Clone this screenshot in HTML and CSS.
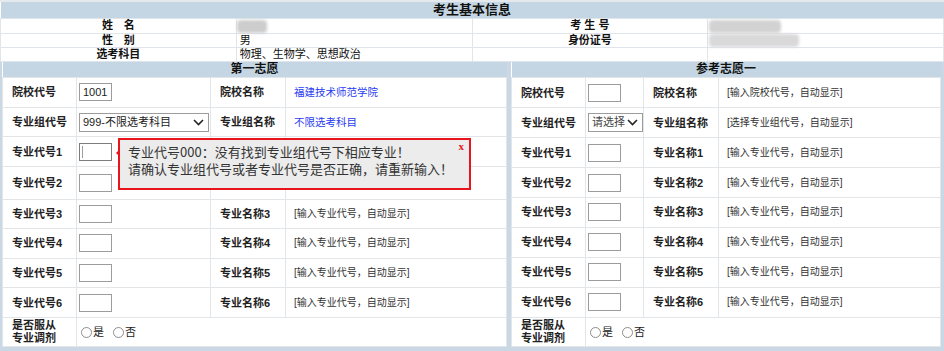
FILE: index.html
```html
<!DOCTYPE html>
<html lang="zh-CN">
<head>
    <meta charset="UTF-8">
    <title>考生基本信息</title>
    <link rel="stylesheet" href="styles.css">
</head>
<body>
    <div class="page">
        <table class="basic">
            <colgroup><col><col><col><col></colgroup>
            <tr><th colspan="4" class="title">考生基本信息</th></tr>
            <tr>
                <td class="lbl">姓&emsp;名</td>
                <td class="val"><span class="blur blur-name"></span></td>
                <td class="lbl">考&nbsp;生&nbsp;号</td>
                <td class="val"><span class="blur blur-no"></span></td>
            </tr>
            <tr>
                <td class="lbl">性&emsp;别</td>
                <td class="val">男</td>
                <td class="lbl">身份证号</td>
                <td class="val"><span class="blur blur-id"></span></td>
            </tr>
            <tr>
                <td class="lbl">选考科目</td>
                <td class="val">物理、生物学、思想政治</td>
                <td></td>
                <td></td>
            </tr>
        </table>

        <div class="wishes">
            <table class="wish wish-main">
                <colgroup><col class="c-lbl"><col class="c-in-main"><col class="c-lbl2"><col></colgroup>
                <tr><th colspan="4">第一志愿</th></tr>
                <tr>
                    <td class="lbl">院校代号</td>
                    <td class="field"><input class="code" type="text" value="1001"></td>
                    <td class="lbl2">院校名称</td>
                    <td class="show">福建技术师范学院</td>
                </tr>
                <tr>
                    <td class="lbl">专业组代号</td>
                    <td class="field">
                        <span class="pick pick-wide">999-不限选考科目
                            <svg class="chev" width="11" height="7" viewBox="0 0 11 7"><path d="M1 1l4.5 4.5L10 1" fill="none" stroke="#222" stroke-width="1.6"/></svg>
                        </span>
                    </td>
                    <td class="lbl2">专业组名称</td>
                    <td class="show">不限选考科目</td>
                </tr>
                <tr>
                    <td class="lbl">专业代号1</td>
                    <td class="field"><span class="code focus"><i class="caret"></i></span></td>
                    <td class="lbl2"></td>
                    <td class="hint"></td>
                </tr>
                <tr>
                    <td class="lbl">专业代号2</td>
                    <td class="field"><input class="code" type="text"></td>
                    <td class="lbl2"></td>
                    <td class="hint hint-low">[输入专业代号，自动显示]</td>
                </tr>
                <tr>
                    <td class="lbl">专业代号3</td>
                    <td class="field"><input class="code" type="text"></td>
                    <td class="lbl2">专业名称3</td>
                    <td class="hint">[输入专业代号，自动显示]</td>
                </tr>
                <tr>
                    <td class="lbl">专业代号4</td>
                    <td class="field"><input class="code" type="text"></td>
                    <td class="lbl2">专业名称4</td>
                    <td class="hint">[输入专业代号，自动显示]</td>
                </tr>
                <tr>
                    <td class="lbl">专业代号5</td>
                    <td class="field"><input class="code" type="text"></td>
                    <td class="lbl2">专业名称5</td>
                    <td class="hint">[输入专业代号，自动显示]</td>
                </tr>
                <tr>
                    <td class="lbl">专业代号6</td>
                    <td class="field"><input class="code" type="text"></td>
                    <td class="lbl2">专业名称6</td>
                    <td class="hint">[输入专业代号，自动显示]</td>
                </tr>
                <tr class="last">
                    <td class="lbl two">是否服从<br>专业调剂</td>
                    <td class="field radios" colspan="3">
                        <label><input type="radio" name="adj1">是</label>
                        <label><input type="radio" name="adj1">否</label>
                    </td>
                </tr>
            </table>

            <table class="wish wish-ref">
                <colgroup><col class="c-lbl"><col class="c-in-ref"><col class="c-lbl2"><col></colgroup>
                <tr><th colspan="4">参考志愿一</th></tr>
                <tr>
                    <td class="lbl">院校代号</td>
                    <td class="field"><input class="code" type="text"></td>
                    <td class="lbl2">院校名称</td>
                    <td class="hint">[输入院校代号，自动显示]</td>
                </tr>
                <tr>
                    <td class="lbl">专业组代号</td>
                    <td class="field">
                        <span class="pick pick-narrow">请选择
                            <svg class="chev" width="11" height="7" viewBox="0 0 11 7"><path d="M1 1l4.5 4.5L10 1" fill="none" stroke="#222" stroke-width="1.6"/></svg>
                        </span>
                    </td>
                    <td class="lbl2">专业组名称</td>
                    <td class="hint">[选择专业组代号，自动显示]</td>
                </tr>
                <tr>
                    <td class="lbl">专业代号1</td>
                    <td class="field"><input class="code" type="text"></td>
                    <td class="lbl2">专业名称1</td>
                    <td class="hint">[输入专业代号，自动显示]</td>
                </tr>
                <tr>
                    <td class="lbl">专业代号2</td>
                    <td class="field"><input class="code" type="text"></td>
                    <td class="lbl2">专业名称2</td>
                    <td class="hint">[输入专业代号，自动显示]</td>
                </tr>
                <tr>
                    <td class="lbl">专业代号3</td>
                    <td class="field"><input class="code" type="text"></td>
                    <td class="lbl2">专业名称3</td>
                    <td class="hint">[输入专业代号，自动显示]</td>
                </tr>
                <tr>
                    <td class="lbl">专业代号4</td>
                    <td class="field"><input class="code" type="text"></td>
                    <td class="lbl2">专业名称4</td>
                    <td class="hint">[输入专业代号，自动显示]</td>
                </tr>
                <tr>
                    <td class="lbl">专业代号5</td>
                    <td class="field"><input class="code" type="text"></td>
                    <td class="lbl2">专业名称5</td>
                    <td class="hint">[输入专业代号，自动显示]</td>
                </tr>
                <tr>
                    <td class="lbl">专业代号6</td>
                    <td class="field"><input class="code" type="text"></td>
                    <td class="lbl2">专业名称6</td>
                    <td class="hint">[输入专业代号，自动显示]</td>
                </tr>
                <tr class="last">
                    <td class="lbl two">是否服从<br>专业调剂</td>
                    <td class="field radios" colspan="3">
                        <label><input type="radio" name="adj2">是</label>
                        <label><input type="radio" name="adj2">否</label>
                    </td>
                </tr>
            </table>

            <div class="tip">
                <span class="tip-close">x</span>
                专业代号000：没有找到专业组代号下相应专业！<br>
                请确认专业组代号或者专业代号是否正确，请重新输入！
            </div>
        </div>
    </div>
</body>
</html>
```

FILE: styles.css
```css
body {
    margin: 0;
    font-family: "Liberation Sans", "Noto Sans CJK SC", sans-serif;
    background: #fff;
    color: #111;
}

.page {
    width: 944px;
    height: 351px;
    box-sizing: border-box;
    border-top: 2px solid #e4e9ed;
    background: #c9d8e4;
    overflow: hidden;
}

/* basic info */
.basic {
    width: 100%;
    border-collapse: collapse;
    table-layout: fixed;
    background: #fff;
}

.basic .title {
    height: 16px;
    padding: 0;
    background: #c4d6e3;
    font-size: 13px;
    line-height: 16px;
    font-weight: bold;
    text-align: center;
}

.basic td {
    height: 13px;
    padding: 0;
    border: 1px solid #dfe5ea;
    font-size: 11px;
    line-height: 13px;
}

.basic .lbl {
    text-align: center;
    font-weight: bold;
}

.basic .val {
    padding-left: 3px;
}

.blur {
    display: inline-block;
    vertical-align: middle;
    height: 13px;
    background: #cdcdcd;
    filter: blur(1.5px);
    border-radius: 4px;
}

.blur-name { width: 30px; margin-left: -3px; }
.blur-no { width: 72px; margin-left: -2px; background: #d2d2d2; }
.blur-id { width: 90px; margin-left: -2px; background: #d9d9d9; }

/* wishes */
.wishes {
    position: relative;
    display: flex;
    gap: 4px;
    padding: 0 3px 0 2px;
}

.wish {
    border-collapse: collapse;
    table-layout: fixed;
    background: #fff;
}

.wish-main { width: 505px; }
.wish-ref { width: 430px; }

.c-lbl { width: 74px; }
.c-lbl2 { width: 75px; }
.c-in-main { width: 134px; }
.c-in-ref { width: 58px; }

.wish th {
    height: 15px;
    padding: 0;
    background: #c4d6e3;
    font-size: 12px;
    line-height: 15px;
    text-align: center;
}

.wish td {
    height: 28.6px;
    padding: 0;
    border: 1px solid #e2e6e9;
    font-size: 11px;
    line-height: 14px;
    vertical-align: middle;
}

.wish .last td {
    height: 28px;
}

.wish .lbl,
.wish .lbl2 {
    padding-left: 9px;
    font-weight: bold;
    color: #222;
}

.wish .two {
    line-height: 13px;
}

.wish .field {
    padding-left: 2px;
}

.wish .show {
    padding-left: 8px;
    color: #2a3cf0;
    font-size: 10.5px;
}

.wish .hint {
    padding-left: 8px;
    color: #333;
    font-size: 10px;
}

.wish .hint-low {
    padding-top: 3px;
}

.code {
    display: block;
    width: 33px;
    height: 18px;
    box-sizing: border-box;
    margin: 0;
    padding: 0 3px;
    border: 1px solid #9c9c9c;
    font-family: inherit;
    font-size: 11px;
    color: #222;
    background: #fff;
}

.code.focus {
    position: relative;
    border-color: #7d7d7d;
}

.caret {
    position: absolute;
    left: 2px;
    top: 2px;
    width: 1px;
    height: 12px;
    background: #9a9a9a;
}

.pick {
    position: relative;
    display: block;
    height: 19px;
    box-sizing: border-box;
    padding-left: 3px;
    border: 1px solid #9c9c9c;
    font-size: 11px;
    line-height: 17px;
    color: #222;
}

.pick-wide { width: 130px; }
.pick-narrow { width: 55px; color: #444; }

.chev {
    position: absolute;
    right: 4px;
    top: 5px;
}

.radios label {
    margin-left: 2px;
    margin-right: 4px;
    font-size: 11px;
    color: #222;
}

.radios input {
    appearance: none;
    width: 11px;
    height: 11px;
    margin: 0 1px 0 0;
    vertical-align: -2px;
    border: 1px solid #8e8e8e;
    border-radius: 50%;
    background: #fff;
}

/* error tip */
.tip {
    position: absolute;
    left: 118px;
    top: 76px;
    width: 353px;
    height: 52px;
    box-sizing: border-box;
    padding: 3px 0 0 8px;
    border: 2px solid #e8161c;
    background: #ececec;
    font-family: "Noto Sans CJK SC", sans-serif;
    font-size: 13px;
    line-height: 17px;
    color: #333;
}

.tip::before {
    content: "";
    position: absolute;
    left: -8px;
    top: 9px;
    border: 4px solid transparent;
    border-right: 4px solid #e8161c;
}

.tip-close {
    position: absolute;
    right: 5px;
    top: 0;
    font-family: "Liberation Serif", serif;
    font-size: 11px;
    font-weight: bold;
    line-height: 12px;
    color: #e8161c;
}
```
